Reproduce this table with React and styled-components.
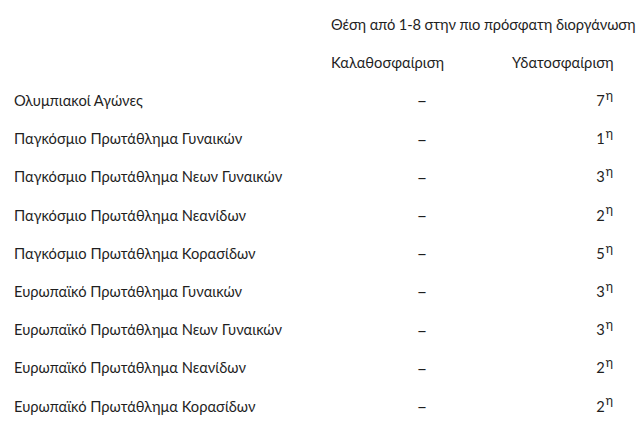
import { Fragment } from "react";
import styled, { createGlobalStyle } from "styled-components";

const GlobalStyle = createGlobalStyle`
  html, body {
    margin: 0;
    padding: 0;
    background: #ffffff;
  }
  body {
    width: 640px;
    height: 423px;
    overflow: hidden;
    font-family: Lato, "Noto Sans", "Open Sans", sans-serif;
    color: #1f1f1f;
  }
`;

const rows = [
  { name: "Ολυμπιακοί Αγώνες", basket: "–", water: "7" },
  { name: "Παγκόσμιο Πρωτάθλημα Γυναικών", basket: "–", water: "1" },
  { name: "Παγκόσμιο Πρωτάθλημα Νεων Γυναικών", basket: "–", water: "3" },
  { name: "Παγκόσμιο Πρωτάθλημα Νεανίδων", basket: "–", water: "2" },
  { name: "Παγκόσμιο Πρωτάθλημα Κορασίδων", basket: "–", water: "5" },
  { name: "Ευρωπαϊκό Πρωτάθλημα Γυναικών", basket: "–", water: "3" },
  { name: "Ευρωπαϊκό Πρωτάθλημα Νεων Γυναικών", basket: "–", water: "3" },
  { name: "Ευρωπαϊκό Πρωτάθλημα Νεανίδων", basket: "–", water: "2" },
  { name: "Ευρωπαϊκό Πρωτάθλημα Κορασίδων", basket: "–", water: "2" },
];

const Table = styled.div`
  display: grid;
  grid-template-columns: 317px 181px 1fr;
  grid-auto-rows: 38.2px;
  align-items: center;
  padding: 5px 0 0 14px;
  font-size: 14.7px;
  line-height: 1;
  white-space: nowrap;
`;

const Cell = styled.div`
  text-align: ${(p) => p.$align || "left"};
  padding-right: ${(p) => (p.$align === "right" ? "27px" : "0")};
`;

const SpanCell = styled.div`
  grid-column: 2 / span 2;
  letter-spacing: -0.12px;
`;

const Dash = styled.div`
  text-align: center;
  font-size: 18px;
  padding-left: 1px;
`;

const Sup = styled.sup`
  font-size: 0.85em;
  vertical-align: 0.5em;
  line-height: 0;
  margin-left: 1px;
`;

export default function App() {
  return (
    <>
      <GlobalStyle />
      <Table>
        <Cell />
        <SpanCell>Θέση από 1-8 στην πιο πρόσφατη διοργάνωση</SpanCell>
        <Cell />
        <Cell>Καλαθοσφαίριση</Cell>
        <Cell>Υδατοσφαίριση</Cell>
        {rows.map((r) => (
          <Fragment key={r.name}>
            <Cell>{r.name}</Cell>
            <Dash>{r.basket}</Dash>
            <Cell $align="right">
              {r.water}
              <Sup>η</Sup>
            </Cell>
          </Fragment>
        ))}
      </Table>
    </>
  );
}
